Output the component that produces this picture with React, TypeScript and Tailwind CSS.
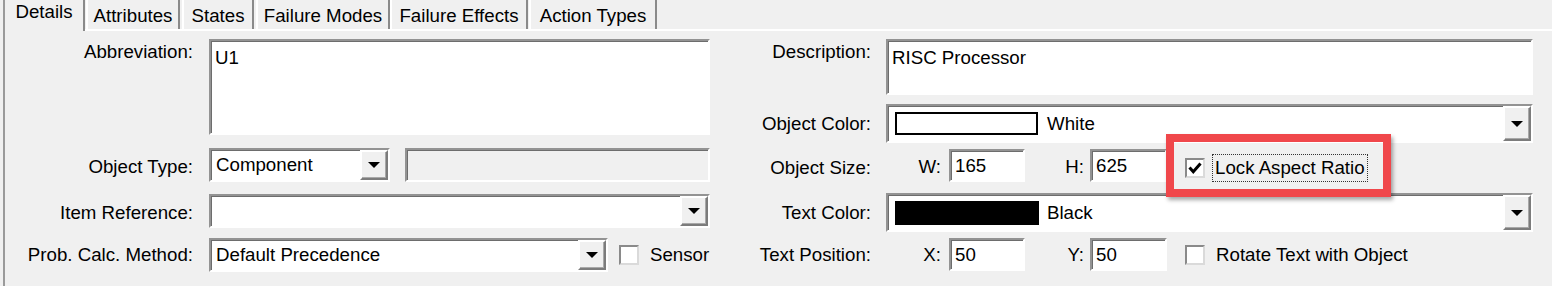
import React from 'react';

function Sunken({ className = '', children }: { className?: string; children?: React.ReactNode }) {
  return (
    <div
      className={`border-2 border-t-[#939393] border-l-[#939393] border-b-white border-r-white shadow-[inset_1px_1px_0_#6d6d6d] ${className}`}
    >
      {children}
    </div>
  );
}

function DropButton() {
  return (
    <div className="flex w-[28px] items-center justify-center self-stretch border-2 border-t-white border-l-white border-b-[#7c7c7c] border-r-[#7c7c7c] bg-[#f0f0f0] shadow-[inset_-1px_-1px_0_#a8a8a8]">
      <div className="h-0 w-0 border-x-[6px] border-t-[6px] border-x-transparent border-t-black" />
    </div>
  );
}

function Combo({ className = '', children }: { className?: string; children?: React.ReactNode }) {
  return (
    <Sunken className={`flex bg-white ${className}`}>
      <div className="flex min-w-0 flex-1 items-center pl-[5px]">{children}</div>
      <DropButton />
    </Sunken>
  );
}

function Checkbox({ checked = false }: { checked?: boolean }) {
  return (
    <div className="flex h-[20px] w-[20px] items-center justify-center border-2 border-t-[#8a8a8a] border-l-[#8a8a8a] border-b-[#dadada] border-r-[#dadada] bg-white">
      {checked && (
        <svg width="16" height="16" viewBox="0 0 16 16">
          <polyline points="2.5,7.5 6.3,11.8 13.5,3.5" fill="none" stroke="black" strokeWidth="3" />
        </svg>
      )}
    </div>
  );
}

const tabs = [
  { name: 'Attributes', cls: 'ml-[1px] w-[94px]' },
  { name: 'States', cls: 'ml-[2px] w-[72px]' },
  { name: 'Failure Modes', cls: 'ml-[2px] w-[134px]' },
  { name: 'Failure Effects', cls: 'ml-[0px] w-[138px]' },
  { name: 'Action Types', cls: 'ml-[1px] w-[128px]' },
];

export default function App() {
  return (
    <div className="flex h-[286px] w-[1552px] overflow-hidden bg-[#f0f0f0] font-['Liberation_Sans',Arial,sans-serif] text-[18.7px] leading-[20px] text-black">
      <div className="w-[3px]" />
      <div className="w-[2px] bg-[#9a9a9a]" />
      <div className="flex flex-1 flex-col">
        {/* tab strip */}
        <div className="flex h-[29px] items-start">
          <div className="relative z-10 h-[31px] w-[80px] border-r-2 border-r-[#8a8a8a] bg-[#f0f0f0] pt-[2px] text-center">
            Details
          </div>
          {tabs.map((t) => (
            <div
              key={t.name}
              className={`h-[29px] whitespace-nowrap border-l-2 border-r-2 border-l-white border-r-[#8a8a8a] pt-[6px] text-center ${t.cls}`}
            >
              {t.name}
            </div>
          ))}
        </div>

        {/* panel */}
        <div className="flex flex-1 border-t-2 border-white">
          {/* left column */}
          <div className="flex w-[705px] flex-col pt-[8px]">
            <div className="flex items-start">
              <div className="mt-[3px] w-[188px] text-right">Abbreviation:</div>
              <Sunken className="ml-[16px] h-[96px] w-[501px] bg-white pl-[4px] pt-[7px]">U1</Sunken>
            </div>
            <div className="mt-[13px] flex h-[34px] items-center">
              <div className="w-[188px] pt-[4px] text-right">Object Type:</div>
              <Combo className="ml-[16px] h-full w-[181px]">Component</Combo>
              <Sunken className="ml-[15px] h-full w-[305px] bg-[#f0f0f0]" />
            </div>
            <div className="mt-[12px] flex h-[34px] items-center">
              <div className="w-[188px] pt-[4px] text-right">Item Reference:</div>
              <Combo className="ml-[16px] h-full w-[501px]" />
            </div>
            <div className="mt-[10px] flex h-[34px] items-center">
              <div className="w-[188px] text-right">Prob. Calc. Method:</div>
              <Combo className="ml-[16px] h-full w-[399px]">Default Precedence</Combo>
              <div className="ml-[11px]">
                <Checkbox />
              </div>
              <span className="ml-[11px]">Sensor</span>
            </div>
          </div>

          {/* right column */}
          <div className="flex w-[823px] flex-col pt-[8px]">
            <div className="flex items-start">
              <div className="mt-[3px] w-[161px] text-right">Description:</div>
              <Sunken className="ml-[15px] h-[56px] w-[647px] bg-white pl-[4px] pt-[7px]">RISC Processor</Sunken>
            </div>
            <div className="mt-[9px] flex h-[39px] items-center">
              <div className="w-[161px] text-right">Object Color:</div>
              <Combo className="ml-[15px] h-full w-[647px]">
                <div className="ml-[2px] h-[23px] w-[143px] border-2 border-black bg-white" />
                <span className="ml-[9px]">White</span>
              </Combo>
            </div>
            <div className="mt-[6px] flex h-[33px] items-center">
              <div className="w-[161px] pt-[4px] text-right">Object Size:</div>
              <span className="w-[70px] pt-[2px] text-right">W:</span>
              <Sunken className="ml-[8px] flex h-full w-[76px] items-center bg-white pl-[4px]">165</Sunken>
              <span className="w-[59px] pt-[2px] text-right">H:</span>
              <Sunken className="ml-[6px] flex h-full w-[77px] items-center bg-white pl-[4px]">625</Sunken>
              <div className="relative ml-[18px] flex items-center pt-[4px]">
                <Checkbox checked />
                <span className="ml-[7px] whitespace-nowrap border border-dotted border-[#333] px-[2px] py-[3px]">
                  Lock Aspect Ratio
                </span>
                <div className="absolute -top-[16px] -right-[23px] -bottom-[15px] -left-[19px] border-[8px] border-[#f0474b] shadow-[2px_3px_4px_rgba(0,0,0,0.35)]" />
              </div>
            </div>
            <div className="mt-[11px] flex h-[39px] items-center">
              <div className="w-[161px] text-right">Text Color:</div>
              <Combo className="ml-[15px] h-full w-[647px]">
                <div className="ml-[2px] h-[24px] w-[144px] bg-black" />
                <span className="ml-[8px]">Black</span>
              </Combo>
            </div>
            <div className="mt-[6px] flex h-[33px] items-center">
              <div className="w-[161px] text-right">Text Position:</div>
              <span className="w-[70px] text-right">X:</span>
              <Sunken className="ml-[8px] flex h-full w-[76px] items-center bg-white pl-[4px]">50</Sunken>
              <span className="w-[59px] text-right">Y:</span>
              <Sunken className="ml-[6px] flex h-full w-[77px] items-center bg-white pl-[4px]">50</Sunken>
              <div className="ml-[18px]">
                <Checkbox />
              </div>
              <span className="ml-[11px] whitespace-nowrap">Rotate Text with Object</span>
            </div>
          </div>
        </div>
      </div>
    </div>
  );
}
